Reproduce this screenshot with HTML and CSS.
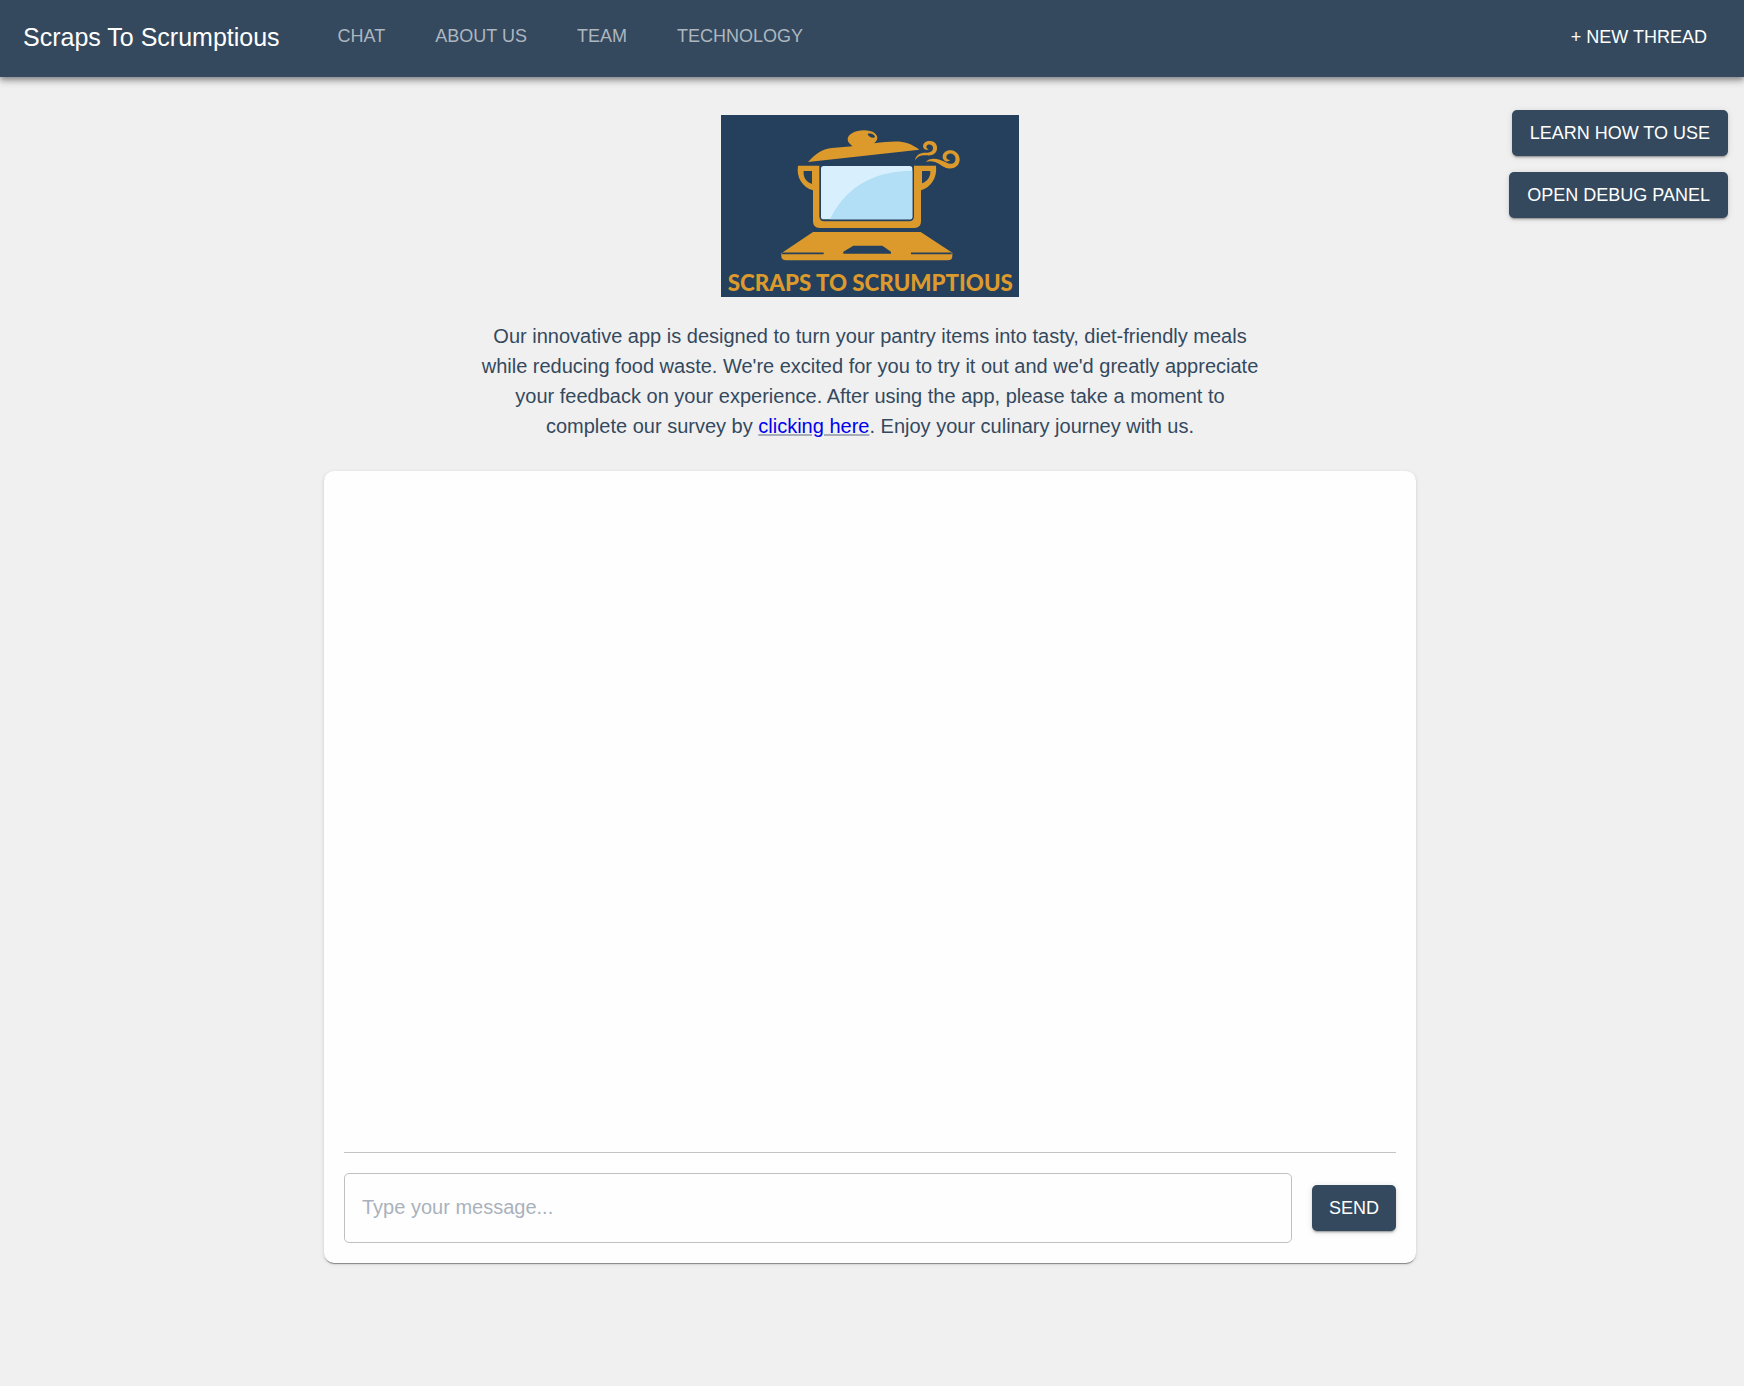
FILE: index.html
```html
<!DOCTYPE html>
<html lang="en">
<head>
  <meta charset="utf-8">
  <meta name="viewport" content="width=device-width, initial-scale=1">
  <title>Scraps To Scrumptious</title>
  <link rel="stylesheet" href="styles.css">
</head>
<body>
  <header class="app-bar">
    <span class="brand">Scraps To Scrumptious</span>
    <nav class="tabs">
      <a class="tab" href="#chat">CHAT</a>
      <a class="tab" href="#about">ABOUT US</a>
      <a class="tab" href="#team">TEAM</a>
      <a class="tab" href="#technology">TECHNOLOGY</a>
    </nav>
    <button class="new-thread" type="button">+ NEW THREAD</button>
  </header>

  <main class="page">
    <div class="content">
      <svg class="logo" viewBox="33 30 894 546" role="img" aria-label="Scraps To Scrumptious logo">
        <rect class="logo-bg" x="33" y="30" width="894" height="546"/>
        <g class="logo-gold">
          <!-- lid -->
          <path d="M294 171C318 145 338 131 366 129L427 124C424 119 413 114 413 103C413 88 435 76 462 76C488 76 502 87 502 98C502 107 495 111 492 115C535 110 569 106 593 115C607 120 618 127 628 134Z"/>
          <!-- pot -->
          <path d="M264 182H328V334Q328 349 343 349H597Q612 349 612 334V182H678C683 220 660 248 633 256V349Q633 369 613 369H329Q309 369 309 349V256C278 247 258 217 264 182ZM281 198C279 216 288 231 306 237V198ZM636 198V235C653 229 662 215 661 198Z" fill-rule="evenodd"/>
          <!-- laptop base -->
          <path d="M309 381H632L727 443V453Q727 466 714 466H229Q214 466 214 453V445ZM430 422L400 440V446H543V440L517 422Z" fill-rule="evenodd"/>
        </g>
        <path class="logo-line" d="M216 445H341M603 445H725"/>
        <path class="logo-bg" d="M473 87C481 83 494 89 495 96C490 101 475 96 473 87Z"/>
        <!-- steam -->
        <path class="logo-gold" d="M615 166C617 150 630 143 646 143C662 143 670 137 669 128C668 118 655 115 650 122C647 127 651 131 656 132C649 138 639 133 639 123C640 113 650 107 661 108C675 109 683 120 681 132C679 146 667 153 650 151C633 149 622 154 615 166Z"/>
        <path class="logo-gold" d="M647 171C655 161 671 158 689 164C704 169 715 178 726 176C738 174 740 156 731 149C722 142 709 147 709 156C709 162 714 165 720 165C714 174 698 168 698 155C698 143 710 135 723 136C739 137 750 150 749 166C747 184 731 193 714 190C700 188 689 175 675 171C665 168 655 168 647 171Z"/>
        <!-- screen -->
        <rect class="screen" x="333" y="183" width="274" height="160" rx="8"/>
        <path class="screen-shade" d="M360 343C398 260 476 198 607 197V335Q607 343 599 343Z"/>
        <text class="logo-text" x="481" y="557" text-anchor="middle">SCRAPS TO SCRUMPTIOUS</text>
      </svg>

      <p class="intro">Our innovative app is designed to turn your pantry items into tasty, diet-friendly meals while reducing food waste. We're excited for you to try it out and we'd greatly appreciate your feedback on your experience. After using the app, please take a moment to complete our survey by <a class="survey-link" href="#survey">clicking here</a>. Enjoy your culinary journey with us.</p>

      <section class="chat" aria-label="Chat">
        <div class="messages"></div>
        <form class="composer">
          <input class="message-input" type="text" placeholder="Type your message..." aria-label="Message">
          <button class="button send" type="button">SEND</button>
        </form>
      </section>
    </div>

    <aside class="actions">
      <button class="button" type="button">LEARN HOW TO USE</button>
      <button class="button" type="button">OPEN DEBUG PANEL</button>
    </aside>
  </main>
</body>
</html>
```
FILE: styles.css
```css
* {
  box-sizing: border-box;
}

body {
  margin: 0;
  min-height: 100vh;
  background: #f0f0f0;
  color: #34495e;
  font-family: "Liberation Sans", Arial, sans-serif;
  font-size: 20px;
  line-height: 30px;
}

button,
input {
  font: inherit;
}

.app-bar {
  display: flex;
  align-items: center;
  height: 77px;
  padding: 0 37px 4px 23px;
  background: #34495e;
  color: #fff;
  box-shadow: 0 2px 5px rgba(0, 0, 0, 0.3), 0 5px 6px rgba(0, 0, 0, 0.14), 0 1px 12px rgba(0, 0, 0, 0.12);
}

.brand {
  font-size: 25px;
}

.tabs {
  display: flex;
  gap: 50px;
  margin-left: 58px;
  padding-bottom: 2px;
}

.tab {
  color: #aeb6bf;
  font-size: 18px;
  text-decoration: none;
}

.new-thread {
  margin-left: auto;
  padding: 0;
  border: 0;
  background: none;
  color: #fff;
  font-size: 18px;
}

.page {
  display: grid;
  grid-template-columns: 1fr minmax(0, 1092px) 1fr;
  padding: 33px 4px 40px 0;
}

.content {
  display: flex;
  flex-direction: column;
  align-items: center;
  grid-column: 2;
  padding-top: 5px;
}

.logo {
  display: block;
  width: 298px;
  height: 182px;
}

.logo-bg {
  fill: #24405c;
}

.logo-gold {
  fill: #dc9a2d;
}

.logo-line {
  stroke: #24405c;
  stroke-width: 5;
}

.screen {
  fill: #d8f0fe;
}

.screen-shade {
  fill: #b2dff6;
}

.logo-text {
  fill: #dc9a2d;
  font-family: Lato, sans-serif;
  font-size: 67px;
  font-weight: 900;
}

.intro {
  max-width: 780px;
  margin: 24px 0 30px;
  text-align: center;
}

.survey-link {
  color: #0000ee;
  text-decoration-color: rgba(52, 73, 94, 0.4);
}

.chat {
  display: flex;
  flex-direction: column;
  width: 100%;
  padding: 20px;
  border-radius: 10px;
  background: #fefefe;
  box-shadow: 0 2px 1px -1px rgba(0, 0, 0, 0.3), 0 1px 1px rgba(0, 0, 0, 0.14), 0 1px 4px rgba(0, 0, 0, 0.12);
}

.messages {
  height: 662px;
  border-bottom: 1px solid #c4c4c4;
}

.composer {
  display: flex;
  align-items: center;
  gap: 20px;
  padding-top: 20px;
}

.message-input {
  flex: 1;
  min-width: 0;
  height: 70px;
  padding: 0 17px 2px;
  border: 1px solid #c0c0c0;
  border-radius: 5px;
  background: transparent;
  color: #34495e;
}

.message-input::placeholder {
  color: #a9b2bc;
  opacity: 1;
}

.actions {
  display: flex;
  flex-direction: column;
  align-items: flex-end;
  gap: 16px;
  padding-right: 12px;
}

.button {
  height: 46px;
  padding: 0 18px;
  border: 0;
  border-radius: 5px;
  background: #34495e;
  color: #fff;
  font-size: 18px;
  white-space: nowrap;
  box-shadow: 0 3px 1px -2px rgba(0, 0, 0, 0.2), 0 2px 2px rgba(0, 0, 0, 0.14), 0 1px 6px rgba(0, 0, 0, 0.12);
}

.send {
  padding: 0 17px;
}
```
